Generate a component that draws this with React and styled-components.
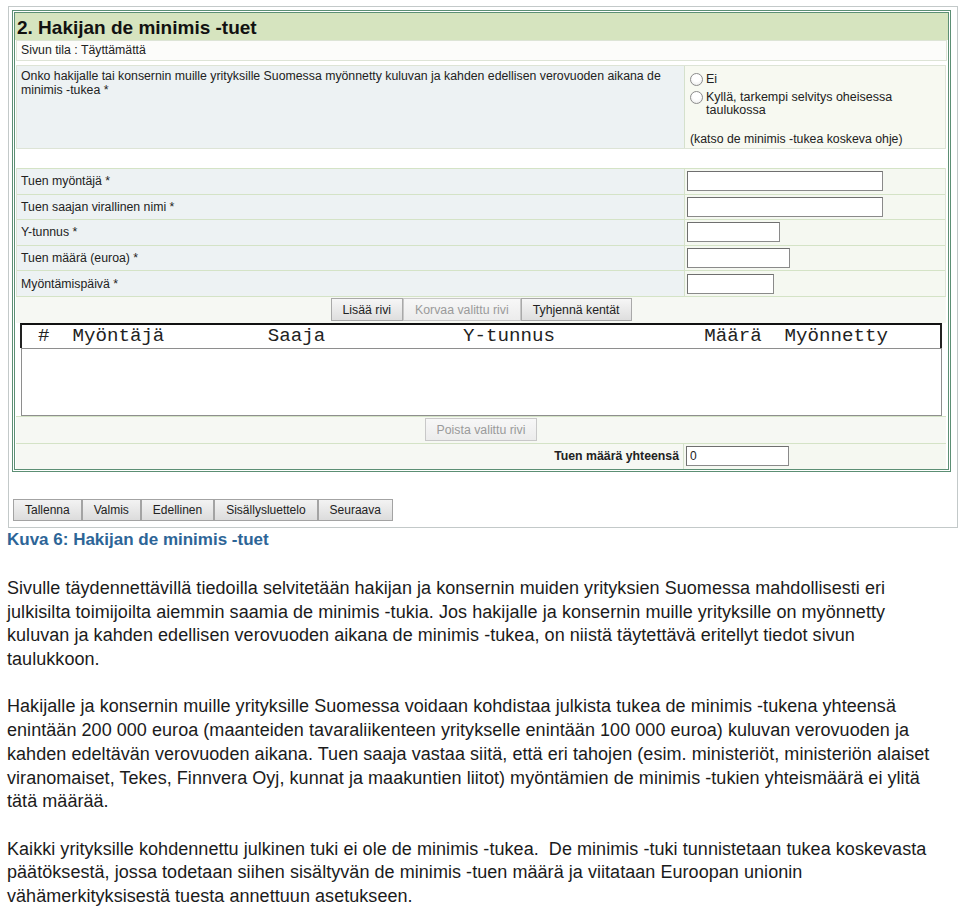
import React from "react";
import styled, { createGlobalStyle } from "styled-components";

const GlobalStyle = createGlobalStyle`
  body {
    margin: 0;
    background: #fff;
    font-family: "Liberation Sans", Arial, sans-serif;
    color: #222;
  }
`;

const fields = [
  { label: "Tuen myöntäjä *", w: 196 },
  { label: "Tuen saajan virallinen nimi *", w: 196 },
  { label: "Y-tunnus *", w: 93 },
  { label: "Tuen määrä (euroa) *", w: 103 },
  { label: "Myöntämispäivä *", w: 87 },
];

const navButtons = ["Tallenna", "Valmis", "Edellinen", "Sisällysluettelo", "Seuraava"];

const header = "#  Myöntäjä         Saaja            Y-tunnus             Määrä  Myönnetty";

export default function App() {
  return (
    <Page>
      <GlobalStyle />
      <Frame>
        <Panel>
          <TitleBar>2. Hakijan de minimis -tuet</TitleBar>
          <Status>Sivun tila : Täyttämättä</Status>
          <Question>
            <QText>
              Onko hakijalle tai konsernin muille yrityksille Suomessa myönnetty kuluvan ja kahden edellisen verovuoden aikana de
              <br />
              minimis -tukea *
            </QText>
            <Choices>
              <Choice>
                <Radio />
                <span>Ei</span>
              </Choice>
              <Choice>
                <Radio />
                <span>
                  Kyllä, tarkempi selvitys oheisessa
                  <br />
                  taulukossa
                </span>
              </Choice>
              <Hint>(katso de minimis -tukea koskeva ohje)</Hint>
            </Choices>
          </Question>

          <Fields>
            {fields.map((f) => (
              <FieldRow key={f.label}>
                <FieldLabel>{f.label}</FieldLabel>
                <FieldCell>
                  <TextInput $w={f.w} />
                </FieldCell>
              </FieldRow>
            ))}
          </Fields>

          <ButtonRow>
            <Button>Lisää rivi</Button>
            <Button disabled>Korvaa valittu rivi</Button>
            <Button>Tyhjennä kentät</Button>
          </ButtonRow>

          <ListHeader>{header}</ListHeader>
          <ListBox />

          <ButtonRow $border>
            <Button disabled>Poista valittu rivi</Button>
          </ButtonRow>

          <TotalRow>
            <TotalLabel>Tuen määrä yhteensä</TotalLabel>
            <FieldCell>
              <TextInput $w={103} defaultValue="0" />
            </FieldCell>
          </TotalRow>
        </Panel>

        <NavBar>
          {navButtons.map((b) => (
            <NavButton key={b}>{b}</NavButton>
          ))}
        </NavBar>
      </Frame>

      <Caption>Kuva 6: Hakijan de minimis -tuet</Caption>

      <Body>
        <P>
          Sivulle täydennettävillä tiedoilla selvitetään hakijan ja konsernin muiden yrityksien Suomessa mahdollisesti eri
          <br />
          julkisilta toimijoilta aiemmin saamia de minimis -tukia. Jos hakijalle ja konsernin muille yrityksille on myönnetty
          <br />
          kuluvan ja kahden edellisen verovuoden aikana de minimis -tukea, on niistä täytettävä eritellyt tiedot sivun
          <br />
          taulukkoon.
        </P>
        <P>
          Hakijalle ja konsernin muille yrityksille Suomessa voidaan kohdistaa julkista tukea de minimis -tukena yhteensä
          <br />
          enintään 200 000 euroa (maanteiden tavaraliikenteen yritykselle enintään 100 000 euroa) kuluvan verovuoden ja
          <br />
          kahden edeltävän verovuoden aikana. Tuen saaja vastaa siitä, että eri tahojen (esim. ministeriöt, ministeriön alaiset
          <br />
          viranomaiset, Tekes, Finnvera Oyj, kunnat ja maakuntien liitot) myöntämien de minimis -tukien yhteismäärä ei ylitä
          <br />
          tätä määrää.
        </P>
        <P>
          Kaikki yrityksille kohdennettu julkinen tuki ei ole de minimis -tukea.&nbsp; De minimis -tuki tunnistetaan tukea koskevasta
          <br />
          päätöksestä, jossa todetaan siihen sisältyvän de minimis -tuen määrä ja viitataan Euroopan unionin
          <br />
          vähämerkityksisestä tuesta annettuun asetukseen.
        </P>
      </Body>
    </Page>
  );
}

const Page = styled.div`
  width: 960px;
  padding-top: 6px;
`;

const Frame = styled.div`
  box-sizing: border-box;
  width: 950px;
  margin-left: 8px;
  border: 1px solid #c3c9c9;
  padding: 3px 6px 6px 3px;
  background: #fff;
`;

const Panel = styled.div`
  border: 3px double #5c8f74;
  background: #fff;
  font-size: 12.3px;
  color: #222;
`;

const TitleBar = styled.div`
  height: 27px;
  line-height: 29px;
  padding-left: 2px;
  background: #d6e4bf;
  font-size: 19px;
  font-weight: bold;
  color: #111;
`;

const Status = styled.div`
  height: 21px;
  line-height: 19px;
  margin: 0 1px;
  padding-left: 4px;
  box-sizing: border-box;
  border: 1px solid #dde4d6;
  background: #fcfcfa;
`;

const Question = styled.div`
  display: grid;
  grid-template-columns: 668px 1fr;
  height: 82px;
  margin: 4px 2px 0 1px;
  border: 1px solid #dde4d6;
`;

const QText = styled.div`
  background: #edf2f3;
  padding: 3px 4px;
  line-height: 14px;
  border-right: 1px solid #d5e1cc;
`;

const Choices = styled.div`
  background: #f7f9f1;
  padding: 7px 4px 0 5px;
  display: flex;
  flex-direction: column;
`;

const Choice = styled.label`
  display: flex;
  align-items: flex-start;
  gap: 3px;
  line-height: 13px;
  margin-bottom: 5px;
  font-size: 12.5px;
`;

const Radio = styled.span`
  flex: none;
  box-sizing: border-box;
  width: 13px;
  height: 13px;
  border-radius: 50%;
  border: 1px solid #8c8c8c;
  background: radial-gradient(circle at 50% 35%, #fff 40%, #e6e6e6 100%);
`;

const Hint = styled.div`
  margin-top: auto;
  padding-bottom: 2px;
  line-height: 14px;
`;

const Fields = styled.div`
  margin: 19px 2px 0 1px;
  border-left: 1px solid #dde4d6;
  border-right: 1px solid #dde4d6;
`;

const FieldRow = styled.div`
  display: grid;
  grid-template-columns: 668px 1fr;
  height: 25.6px;
  box-sizing: border-box;
  border-top: 1px solid #d4e3c6;
`;

const FieldLabel = styled.div`
  background: #edf2f3;
  border-right: 1px solid #d5e1cc;
  padding-left: 4px;
  display: flex;
  align-items: center;
`;

const FieldCell = styled.div`
  background: #f5f8f1;
  padding-left: 2px;
  display: flex;
  align-items: center;
`;

const TextInput = styled.input`
  box-sizing: border-box;
  width: ${(p) => p.$w}px;
  height: 20px;
  margin: 0;
  padding: 0 3px;
  border: 1px solid #8a8a8a;
  border-top-color: #6f6f6f;
  border-left-color: #6f6f6f;
  background: #fff;
  font-family: "Liberation Sans", Arial, sans-serif;
  font-size: 12px;
  color: #222;
`;

const ButtonRow = styled.div`
  display: flex;
  justify-content: center;
  align-items: center;
  height: 26px;
  margin: 0 2px 0 1px;
  background: #f6f8f3;
  border-top: 1px solid #d4e3c6;
  border-bottom: ${(p) => (p.$border ? "1px solid #d4e3c6" : "none")};
`;

const Button = styled.button`
  height: 23px;
  margin: 0;
  padding: 0 11px;
  border: 1px solid #a9a9a9;
  background: linear-gradient(#f6f6f6, #dedede);
  font-family: "Liberation Sans", Arial, sans-serif;
  font-size: 12.3px;
  color: #222;

  &:disabled {
    color: #9a9a9a;
    background: linear-gradient(#f7f7f7, #ececec);
    border-color: #c8c8c8;
  }
`;

const ListHeader = styled.div`
  height: 23px;
  margin: 0 6px 0 5px;
  padding-left: 16px;
  border-top: 2px solid #111;
  border-left: 2px solid #222;
  border-right: 2px solid #222;
  background: #fff;
  font-family: "Liberation Mono", "Courier New", monospace;
  font-size: 19.15px;
  line-height: 23px;
  white-space: pre;
  color: #222;
`;

const ListBox = styled.div`
  height: 66px;
  margin: 0 6px 0 6px;
  border: 1px solid #8e8e8e;
  background: #fff;
`;

const TotalRow = styled.div`
  display: grid;
  grid-template-columns: 668px 1fr;
  height: 25px;
  margin: 0 2px 0 1px;
`;

const TotalLabel = styled.div`
  background: #f6f8f3;
  border-right: 1px solid #d5e1cc;
  padding-right: 4px;
  display: flex;
  align-items: center;
  justify-content: flex-end;
  font-weight: bold;
`;

const NavBar = styled.div`
  display: flex;
  margin-top: 27px;
  padding-left: 1px;
`;

const NavButton = styled.button`
  height: 22px;
  margin: 0;
  padding: 0 11px;
  border: 1px solid #a3a3a3;
  background: linear-gradient(#f3f3f3, #dcdcdc);
  font-family: "Liberation Sans", Arial, sans-serif;
  font-size: 12px;
  color: #222;
`;

const Caption = styled.div`
  margin: 3px 0 0 7px;
  font-size: 17px;
  line-height: 18px;
  font-weight: bold;
  color: #2d6597;
`;

const Body = styled.div`
  margin: 28px 0 0 7px;
  font-size: 18px;
  letter-spacing: 0.05px;
  line-height: 23.7px;
  color: #1b1b1b;
  white-space: nowrap;
`;

const P = styled.p`
  margin: 0 0 23.7px;
`;
